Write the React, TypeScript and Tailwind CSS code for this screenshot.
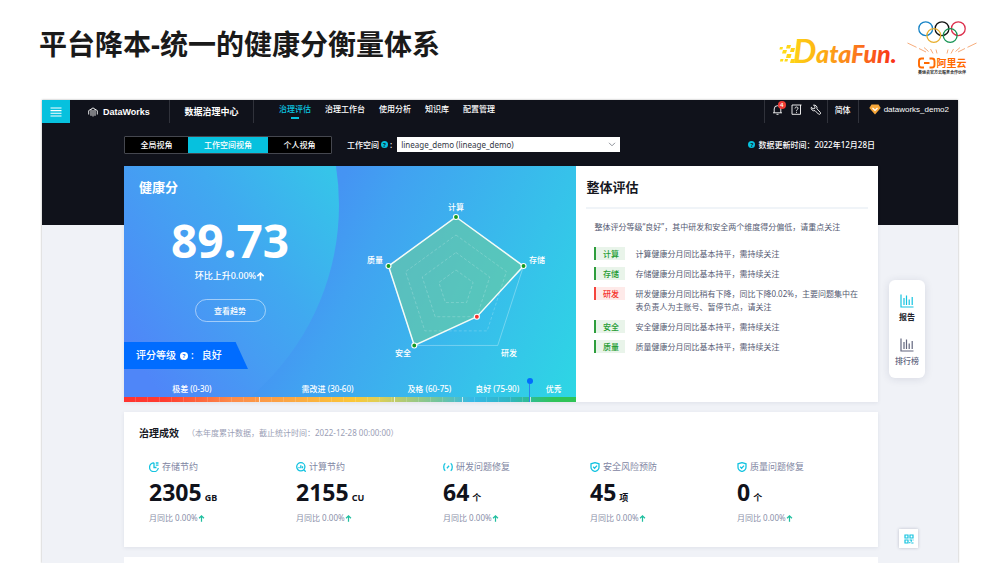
import { useState } from "react";
import type { ReactNode } from "react";

const NAV_ITEMS = ["治理评估", "治理工作台", "使用分析", "知识库", "配置管理"];

const VIEWS = [
  { label: "全局视角", width: "w-[63px]" },
  { label: "工作空间视角", width: "w-20" },
  { label: "个人视角", width: "w-[63px]" },
];

const ASSESSMENTS = [
  { tag: "计算", good: true, text: "计算健康分月同比基本持平，需持续关注" },
  { tag: "存储", good: true, text: "存储健康分月同比基本持平，需持续关注" },
  {
    tag: "研发",
    good: false,
    text: "研发健康分月同比稍有下降，同比下降0.02%，主要问题集中在表负责人为主账号、暂停节点，请关注",
  },
  { tag: "安全", good: true, text: "安全健康分月同比基本持平，需持续关注" },
  { tag: "质量", good: true, text: "质量健康分月同比基本持平，需持续关注" },
];

function DataFunLogo() {
  return (
    <svg viewBox="0 0 120 40" className="h-10 w-[120px] overflow-visible" role="img" aria-label="DataFun">
      <defs>
        <linearGradient id="fun" gradientUnits="userSpaceOnUse" x1="0" y1="0" x2="118" y2="0">
          <stop offset="0" stopColor="#ffe11a" />
          <stop offset="0.3" stopColor="#fdb913" />
          <stop offset="0.65" stopColor="#fb7a1c" />
          <stop offset="1" stopColor="#f92c16" />
        </linearGradient>
      </defs>
      <g fill="url(#fun)">
        <path d="M1 17h3l-.6 2.500h-3zM8 15h4l-1 3.500H7zM4 20h4l-1 3.500H3zM12 18h4l-1 4h-4zM1.500 29h3l-.6 2.500h-3zM8 24h4.500l-1 4H7zM12 29h4l-1 4h-4zM6 29h3l-.6 2.500h-3z" />
        <text x="14" y="33" fontFamily="Lato, sans-serif" fontSize="33" fontWeight="700" fontStyle="italic">D</text>
        <text x="37" y="33" fontFamily="Lato, sans-serif" fontSize="25" fontWeight="900" fontStyle="italic">ataFun.</text>
      </g>
    </svg>
  );
}

function AliyunLogo() {
  return (
    <svg viewBox="0 0 70 55" className="h-[55px] w-[70px]" role="img" aria-label="阿里云">
      <g fill="none" strokeWidth="1.3">
        <circle cx="18.700" cy="8.700" r="6.900" stroke="#1683c6" />
        <circle cx="35" cy="8.700" r="6.900" stroke="#111" />
        <circle cx="51.300" cy="8.700" r="6.900" stroke="#dc2f4c" />
        <circle cx="26.800" cy="15.500" r="6.900" stroke="#e8ae2c" />
        <circle cx="43.200" cy="15.500" r="6.900" stroke="#159353" />
      </g>
      <path
        d="M.5 23l9 4.300M12 28.500l7 3.500M17 27.500l4.500 4M23.500 29l2.500 4.500M29 29.500l1 4M69.500 23l-9 4.300M58 28.500l-7 3.500M53 27.500l-4.500 4M46.500 29l-2.500 4.500M41 29.500l-1 4"
        stroke="#f5a26b"
        strokeWidth="0.9"
        fill="none"
      />
      <path
        d="M17 38.500h-2.500a2.500 2.500 0 0 0-2.500 2.500v4a2.500 2.500 0 0 0 2.500 2.500H17M22.500 38.500H25a2.500 2.500 0 0 1 2.500 2.500v4a2.500 2.500 0 0 1-2.500 2.500h-2.500M17 43h5.500"
        stroke="#ff6a00"
        strokeWidth="1.900"
        fill="none"
      />
      <text x="29.500" y="47" fontSize="10" fontWeight="700" fill="#ff6a00">阿里云</text>
      <text x="11" y="53.500" fontSize="4" fontWeight="700" fill="#333">奥运会官方云服务合作伙伴</text>
    </svg>
  );
}

function HelpDot({ className }: { className: string }) {
  return (
    <span className={`inline-flex shrink-0 items-center justify-center rounded-full font-bold ${className}`}>?</span>
  );
}

function UpArrow({ className }: { className: string }) {
  return (
    <svg viewBox="0 0 8 8" className={className} fill="none" stroke="currentColor" strokeWidth="1.400" aria-hidden="true">
      <path d="M4 7.600V1M1.200 3.700 4 1l2.800 2.700" />
    </svg>
  );
}

function ChartIcon() {
  return (
    <svg viewBox="0 0 14 14" className="size-[14px]" fill="none" stroke="currentColor" strokeWidth="1.200" aria-hidden="true">
      <path d="M1 .5v12.500h12.500M4 11V4M6.500 11V1.500M9.200 11V5.500M12.200 11V3" />
    </svg>
  );
}

const ICON_STORAGE = (
  <>
    <path d="M5 .8A4.400 4.400 0 1 0 9.300 6M5 .8V5.500h2.500" />
    <path d="M6.800 1h2.700M6.800 3.200h2.700" />
  </>
);
const ICON_COMPUTE = (
  <>
    <circle cx="4.800" cy="4.800" r="4.100" />
    <path d="M7.700 7.700 9.700 9.700M3 6.200V5M4.800 6.200V3.200M6.500 6.200V4.300" />
  </>
);
const ICON_DEV = <path d="M2.300 1.200C.2 2.500.2 7.500 2.300 8.800M7.700 1.200c2.100 1.300 2.100 6.300 0 7.600M3.900 6.200l2.200-2.400" />;
const ICON_SHIELD = (
  <>
    <path d="M5 .6 9 1.800v3.400C9 7.500 7 8.800 5 9.500 3 8.800 1 7.500 1 5.200V1.800z" />
    <path d="m3.200 4.800 1.400 1.400 2.400-2.600" />
  </>
);

const METRICS: { label: string; value: string; unit: string; icon: ReactNode }[] = [
  { label: "存储节约", value: "2305", unit: "GB", icon: ICON_STORAGE },
  { label: "计算节约", value: "2155", unit: "CU", icon: ICON_COMPUTE },
  { label: "研发问题修复", value: "64", unit: "个", icon: ICON_DEV },
  { label: "安全风险预防", value: "45", unit: "项", icon: ICON_SHIELD },
  { label: "质量问题修复", value: "0", unit: "个", icon: ICON_SHIELD },
];

function ring(radius: number, scale: number[] = [1, 1, 1, 1, 1]) {
  return scale.map((s, i) => {
    const a = (Math.PI * 2 * i) / 5;
    return [90 + radius * s * Math.sin(a), 92 - radius * s * Math.cos(a)];
  });
}

const toPoints = (pts: number[][]) => pts.map((p) => p.join(",")).join(" ");

function Radar() {
  const scores = ring(71, [1, 1, 0.5, 1, 1]);
  return (
    <svg viewBox="0 0 180 170" className="h-[170px] w-[180px]" role="img" aria-label="健康分雷达图">
      <polygon points={toPoints(ring(71))} fill="none" stroke="#fff" strokeOpacity="0.3" />
      <polygon points={toPoints(scores)} fill="#6acba0" fillOpacity="0.62" />
      {[53, 35.5, 18].map((r) => (
        <polygon key={r} points={toPoints(ring(r))} fill="none" stroke="#fff" strokeOpacity="0.25" strokeWidth="0.800" strokeDasharray="3 2" />
      ))}
      <polygon points={toPoints(scores)} fill="none" stroke="#f3fbf7" strokeWidth="1.500" />
      {scores.map(([x, y], i) => (
        <circle key={i} cx={x} cy={y} r="2.500" fill={i === 2 ? "#f5342c" : "#159a20"} stroke="#fff" strokeWidth="1.100" />
      ))}
      <g fill="#fff" fontSize="8" fontWeight="500" textAnchor="middle">
        <text x="90" y="14">计算</text>
        <text x="171" y="67">存储</text>
        <text x="143" y="160">研发</text>
        <text x="37" y="160">安全</text>
        <text x="9" y="67">质量</text>
      </g>
    </svg>
  );
}

function TopBar() {
  return (
    <header className="flex h-[23px] items-stretch text-[8px] font-medium leading-3 text-white">
      <button type="button" aria-label="菜单" className="flex w-7 items-center justify-center bg-[#06c1de]">
        <svg viewBox="0 0 12 10" className="h-[10px] w-3" stroke="#fff" strokeWidth="1.100">
          <path d="M.5 1h11M.5 3.600h11M.5 6.300h11M.5 9h11" />
        </svg>
      </button>
      <a href="#home" className="flex w-[100px] items-center gap-[5px] border-r border-[#30323b] pl-[18px]">
        <svg viewBox="0 0 10 10" className="size-[10px]" fill="none" stroke="#fff" strokeWidth="0.900" aria-hidden="true">
          <path d="M.7 7.500V3.600L3 2.200v6.600M3 2.200 5 .9l2 1.300v6.600M7 2.200l2.300 1.400v3.900M5 3v6.500" />
        </svg>
        <span className="font-['Liberation_Sans',sans-serif] text-[9px] font-bold">DataWorks</span>
      </a>
      <div className="flex w-[84px] items-center justify-center border-r border-[#30323b] text-[9px] font-bold">数据治理中心</div>
      <nav className="flex gap-[14px] pl-[25px]" aria-label="主导航">
        {NAV_ITEMS.map((item, i) => (
          <a key={item} href={`#nav-${i}`} className={i === 0 ? "flex flex-col items-center pt-[3px] text-[#0ac4e0]" : "pt-[3px]"}>
            {item}
            {i === 0 && <span className="mt-[2px] h-[2px] w-2 bg-[#06c1de]" />}
          </a>
        ))}
      </nav>
      <div className="ml-auto flex">
        <div className="flex items-center gap-2 border-x border-[#30323b] pb-1 pl-[7px] pr-[6px]">
          <button type="button" aria-label="通知" className="relative">
            <svg viewBox="0 0 11 11" className="size-[11px]" fill="none" stroke="#fff" strokeWidth="0.900">
              <path d="M1 8.800h9M2.200 8.800V5a3.300 3.300 0 0 1 6.600 0v3.800M4.500 10.300h2" />
            </svg>
            <span className="absolute -right-[3px] -top-[3px] flex size-2 items-center justify-center rounded-full bg-[#ee3b35] text-[6px] leading-none">4</span>
          </button>
          <button type="button" aria-label="帮助">
            <svg viewBox="0 0 11 11" className="size-[11px]" fill="none" stroke="#fff" strokeWidth="0.900">
              <path d="M10.500 1H1v9.300h8.500V1M4 4.500c0-2 3-2 3-.2 0 1.200-1.500 1.200-1.500 2.500M5.500 7.800v1" />
            </svg>
          </button>
          <button type="button" aria-label="设置">
            <svg viewBox="0 0 11 11" className="size-[11px]" fill="none" stroke="#fff" strokeWidth="0.900">
              <path d="M3.500 1.200a2.800 2.800 0 0 1 3.400 3.600l3.300 3.400a1.200 1.200 0 0 1-1.800 1.800L5 6.600A2.800 2.800 0 0 1 1.300 3.200L3 4.800l1.800-.4.300-1.700z" />
            </svg>
          </button>
        </div>
        <button type="button" className="border-r border-[#30323b] px-[7px] pb-1">简体</button>
        <a href="#account" className="flex items-center gap-[3px] pb-1 pl-[10px] pr-[9px]">
          <svg viewBox="0 0 12 11" className="h-[11px] w-3" aria-hidden="true">
            <path d="M2.500.5h7L11.700 4 6 10.500.3 4z" fill="#f7a73a" />
            <path d="M3.500 4 6 6.500 8.500 4" fill="none" stroke="#fff" strokeWidth="1.200" />
          </svg>
          <span className="font-['Liberation_Sans',sans-serif]">dataworks_demo2</span>
        </a>
      </div>
    </header>
  );
}

function FilterBar() {
  const [view, setView] = useState(1);
  return (
    <div className="flex h-[43px] items-center pl-[82px] pr-[83px] text-[8px] font-medium leading-3 text-white">
      <div className="flex h-[18px] rounded-[1px] border border-[#45474f] bg-black">
        {VIEWS.map((v, i) => (
          <button
            key={v.label}
            type="button"
            aria-pressed={view === i}
            onClick={() => setView(i)}
            className={`${v.width} ${view === i ? "bg-[#06c1de]" : "bg-black"}`}
          >
            {v.label}
          </button>
        ))}
      </div>
      <label htmlFor="workspace" className="ml-[15px] flex items-center gap-[2px]">
        工作空间
        <HelpDot className="size-[7px] bg-[#06c1de] text-[6px] leading-none text-[#10121b]" />:
      </label>
      <div className="relative ml-[5px] w-[223px]">
        <select
          id="workspace"
          className="block h-[15px] w-full appearance-none bg-white pl-[4px] text-[8px] font-normal leading-[15px] text-[#333844]"
        >
          <option>lineage_demo (lineage_demo)</option>
        </select>
        <svg viewBox="0 0 8 5" className="pointer-events-none absolute right-1 top-[5px] h-[5px] w-2" fill="none" stroke="#8d9199">
          <path d="m1 .8 3 3 3-3" />
        </svg>
      </div>
      <div className="ml-auto flex items-center gap-[3px]">
        <HelpDot className="size-[7px] bg-[#06c1de] text-[6px] leading-none text-[#10121b]" />
        数据更新时间：2022年12月28日
      </div>
    </div>
  );
}

function ScoreCard() {
  return (
    <section className="relative flex h-[236px] flex-col overflow-hidden bg-[linear-gradient(115deg,#4a8ff5_0%,#4594f3_40%,#41a2f1_50%,#36c2ea_80%,#2dd7e4_100%)] text-white">
      <div
        aria-hidden="true"
        className="absolute -left-[289px] -top-[213px] size-[504px] rounded-full bg-[linear-gradient(55deg,#4f86f8_43%,#469cf3_57%,#40a9f0_66%,#36c4e9_81%)]"
      />
      <div className="relative flex flex-1">
        <div className="flex w-[212px] flex-col">
          <h2 className="pl-[15px] pt-[11px] text-[13px] font-bold leading-5">健康分</h2>
          <div className="flex flex-col items-center">
            <div className="mt-[17px] text-[46px] font-bold leading-[52px]">89.73</div>
            <div className="mt-[3px] flex items-center text-[9px] font-medium leading-[14px]">
              环比上升0.00%
              <UpArrow className="size-[9px]" />
            </div>
            <button type="button" className="mt-4 h-[23px] w-[71px] rounded-full border border-white/50 text-[8px] font-medium">
              查看趋势
            </button>
          </div>
          <div className="mt-5 flex h-[27px] w-[124px] items-center bg-[#006cff] pl-3 text-[10px] font-medium [clip-path:polygon(0_0,90%_0,100%_100%,0_100%)]">
            评分等级
            <HelpDot className="ml-1 size-[8px] bg-white text-[6px] leading-none text-[#006cff]" />
            <span className="ml-[3px]">:</span>
            <span className="ml-2">良好</span>
          </div>
        </div>
        <div className="flex flex-1 justify-center pt-[30px]">
          <Radar />
        </div>
      </div>
      <div className="relative grid grid-cols-[30fr_30fr_15fr_15fr_10fr] pb-[2px] text-center text-[8px] font-medium leading-3">
        <span>极差 (0-30)</span>
        <span>需改进 (30-60)</span>
        <span>及格 (60-75)</span>
        <span>良好 (75-90)</span>
        <span>优秀</span>
      </div>
      <div className="relative grid h-[5px] grid-cols-[30fr_30fr_15fr_15fr_10fr] divide-x divide-white/70 bg-[linear-gradient(90deg,#ff3430_0%,#ff3d30_9%,#fd8c4a_24%,#fba544_36%,#fbc738_51%,#e0cf55_56%,#6ec4a0_70%,#35b9e8_77%,#30b6c4_85%,#2fc45a_95%,#2fc456_100%)]">
        {[0, 1, 2, 3, 4].map((n) => (
          <span key={n} className={n === 4 ? "" : "bg-[repeating-linear-gradient(90deg,transparent_0_11px,rgba(255,255,255,0.150)_11px_12px)]"} />
        ))}
      </div>
      <div aria-hidden="true" className="absolute bottom-0 left-[89%] flex w-[6px] flex-col items-center">
        <span className="size-[6px] rounded-full bg-[#006cff]" />
        <span className="h-[18px] w-px bg-[#2b83f0]" />
      </div>
    </section>
  );
}

function AssessmentCard() {
  return (
    <section className="bg-white px-[10px] pt-[11px]">
      <h2 className="text-[13px] font-bold leading-5 text-[#16181f]">整体评估</h2>
      <div className="mt-[10px] h-[2px] bg-[#f0f4f8]" />
      <div className="px-2 text-[8px] leading-[13px] text-[#555a72]">
        <p className="mt-[11px] whitespace-nowrap">整体评分等级“良好”，其中研发和安全两个维度得分偏低，请重点关注</p>
        <ul className="mt-[14px] flex flex-col gap-[7px]">
          {ASSESSMENTS.map((a) => (
            <li key={a.tag} className="flex items-start gap-[10px]">
              <span
                className={`w-[31px] shrink-0 border-l-2 text-center font-medium ${
                  a.good ? "border-[#2e9e3c] bg-[#e9f4ea] text-[#259c33]" : "border-[#f5443c] bg-[#feeae9] text-[#f5342c]"
                }`}
              >
                {a.tag}
              </span>
              <span>{a.text}</span>
            </li>
          ))}
        </ul>
      </div>
    </section>
  );
}

function ResultsCard() {
  return (
    <section className="h-[135px] bg-white pl-[15px] pt-[13px] shadow-[0_1px_4px_rgba(30,40,80,0.080)]">
      <div className="flex items-center gap-2">
        <h2 className="text-[10px] font-bold leading-4 text-[#16181f]">治理成效</h2>
        <span className="text-[8px] leading-4 text-[#9a9eb5]">（本年度累计数据，截止统计时间：2022-12-28 00:00:00）</span>
      </div>
      <div className="mt-[19px] grid grid-cols-[repeat(4,minmax(0,1fr))_141px] pl-[10px]">
        {METRICS.map((m) => (
          <div key={m.label}>
            <div className="flex items-center gap-[3px] text-[9px] leading-[14px] text-[#7f86a3]">
              <svg viewBox="0 0 10 10" className="size-[10px]" fill="none" stroke="#14c3e0" strokeWidth="1.300" aria-hidden="true">
                {m.icon}
              </svg>
              {m.label}
            </div>
            <div className="mt-1 flex items-baseline gap-[3px] font-bold text-[#10121b]">
              <span className="text-[23px] leading-7">{m.value}</span>
              <span className="text-[9px] leading-3">{m.unit}</span>
            </div>
            <div className="mt-[6px] flex items-center text-[8px] leading-3 text-[#8a8fa9]">
              月同比 0.00%
              <UpArrow className="size-[7px] text-[#1fbf9f]" />
            </div>
          </div>
        ))}
      </div>
    </section>
  );
}

function FloatingTools() {
  return (
    <>
      <aside className="absolute right-[33px] top-[180px] flex w-9 flex-col items-center gap-[15px] rounded-[6px] bg-white pb-[11px] pt-[14px] text-[8px] leading-3 shadow-[0_1px_8px_rgba(30,40,80,0.120)]">
        <button type="button" className="flex flex-col items-center gap-[3px] font-bold text-[#22242c]">
          <span className="text-[#14c3e0]"><ChartIcon /></span>
          报告
        </button>
        <button type="button" className="flex flex-col items-center gap-[3px] font-medium text-[#63677f]">
          <ChartIcon />
          排行榜
        </button>
      </aside>
      <button type="button" aria-label="二维码" className="absolute right-10 top-[429px] flex size-[19px] items-center justify-center bg-white shadow-[0_0_3px_rgba(30,40,80,0.250)]">
        <svg viewBox="0 0 10 10" className="size-[10px]" fill="none" stroke="#14c3e0" strokeWidth="1.200">
          <path d="M1 1h3v3H1zM6 1h3v3H6zM1 6h3v3H1zM5.500 6h1.800v1.700M9.500 6H8.600M5.800 9.300V8M7.300 9h2.200" />
        </svg>
      </button>
    </>
  );
}

export default function App() {
  return (
    <div className="flex min-h-screen flex-col bg-white font-['Noto_Sans','Noto_Sans_CJK_SC',sans-serif]">
      <div className="flex h-[100px] items-start pl-[39px] pr-[23px]">
        <h1 className="pt-6 text-[28px] font-bold leading-10 text-[#1a1a1a]">平台降本-统一的健康分衡量体系</h1>
        <div className="ml-auto flex items-start gap-2 pt-5">
          <div className="pt-[10px]"><DataFunLogo /></div>
          <AliyunLogo />
        </div>
      </div>
      <main className="relative mx-[42px] flex flex-1 flex-col bg-[linear-gradient(#10121b_125px,#f0f2f7_125px)] shadow-[0_0_2px_rgba(0,0,0,0.350)]">
        <TopBar />
        <FilterBar />
        <div className="flex flex-1 flex-col gap-[10px] pl-[82px] pr-20">
          <div className="grid grid-cols-[minmax(0,3fr)_minmax(0,2fr)] shadow-[0_1px_4px_rgba(30,40,80,0.080)]">
            <ScoreCard />
            <AssessmentCard />
          </div>
          <ResultsCard />
          <section className="flex-1 bg-white" />
        </div>
        <FloatingTools />
      </main>
    </div>
  );
}
